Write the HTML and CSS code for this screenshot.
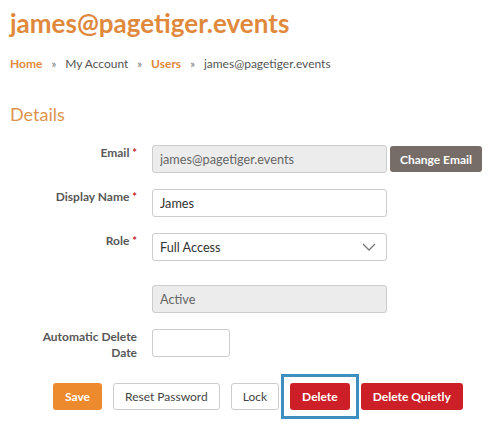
FILE: index.html
```html
<!DOCTYPE html>
<html lang="en">
<head>
    <meta charset="UTF-8">
    <meta name="viewport" content="width=device-width, initial-scale=1.0">
    <title>james@pagetiger.events</title>
    <link rel="stylesheet" href="styles.css">
</head>
<body>
    <div id="page">
        <h1 id="page-title">james@pagetiger.events</h1>
        <div id="breadcrumb">
            <a href="#">Home</a>
            <span class="sep">&raquo;</span>
            <span>My Account</span>
            <span class="sep">&raquo;</span>
            <a href="#">Users</a>
            <span class="sep">&raquo;</span>
            <span>james@pagetiger.events</span>
        </div>

        <h2 id="section-title">Details</h2>

        <div id="user-form">
            <div class="form-row">
                <label class="form-label">Email <span class="req">*</span></label>
                <div class="form-field">
                    <input class="text-input disabled" type="text" value="james@pagetiger.events" disabled>
                    <button class="btn btn-grey">Change Email</button>
                </div>
            </div>
            <div class="form-row">
                <label class="form-label">Display Name <span class="req">*</span></label>
                <div class="form-field">
                    <input class="text-input" type="text" value="James">
                </div>
            </div>
            <div class="form-row">
                <label class="form-label">Role <span class="req">*</span></label>
                <div class="form-field">
                    <div class="select-box">
                        <span>Full Access</span>
                        <svg class="chevron" width="14" height="8" viewBox="0 0 14 8"><path d="M1 1 L7 7 L13 1" fill="none" stroke="#777" stroke-width="1.3"/></svg>
                    </div>
                </div>
            </div>
            <div class="form-row row-spaced">
                <label class="form-label"></label>
                <div class="form-field">
                    <input class="text-input disabled" type="text" value="Active" disabled>
                </div>
            </div>
            <div class="form-row">
                <label class="form-label">Automatic Delete Date</label>
                <div class="form-field">
                    <input class="text-input date-input" type="text" value="">
                </div>
            </div>
        </div>

        <!-- Кнопки действий -->
        <div id="actions">
            <button class="btn btn-orange">Save</button>
            <button class="btn btn-white">Reset Password</button>
            <button class="btn btn-white">Lock</button>
            <span class="highlight-wrap"><button class="btn btn-red">Delete</button></span>
            <button class="btn btn-red">Delete Quietly</button>
        </div>
    </div>
</body>
</html>
```

FILE: styles.css
```css
* {
    margin: 0;
    padding: 0;
    box-sizing: border-box;
}

body {
    font-family: Lato, "Open Sans", Arial, sans-serif;
    background: white;
    color: #444;
}

#page {
    padding: 7px 10px 30px 10px;
}

#page-title {
    font-size: 26px;
    font-weight: bold;
    color: #e0893c;
    line-height: 32px;
}

#breadcrumb {
    margin-top: 17px;
    font-size: 12px;
    color: #555;
    display: flex;
    gap: 8px;
    align-items: center;
}

#breadcrumb a {
    color: #e0893c;
    font-weight: bold;
    text-decoration: none;
}

#breadcrumb .sep {
    color: #777;
    font-size: 11px;
    padding: 0 1px;
}

#section-title {
    margin-top: 32px;
    font-size: 18px;
    font-weight: normal;
    color: #dc9550;
    line-height: 22px;
}

#user-form {
    margin-top: 20px;
    margin-left: 20px;
    display: flex;
    flex-direction: column;
    gap: 16px;
}

.form-row {
    display: grid;
    grid-template-columns: 107px 1fr;
    column-gap: 15px;
    align-items: start;
}

.row-spaced {
    margin-top: 8px;
}

.form-label {
    text-align: right;
    font-size: 12px;
    font-weight: bold;
    color: #585858;
    padding-top: 0;
    line-height: 16px;
}

.req {
    color: #c0262c;
    font-size: 11px;
    vertical-align: top;
}

.form-field {
    display: flex;
    gap: 3px;
    align-items: center;
}

.text-input {
    width: 235px;
    height: 28px;
    border: 1px solid #ccc;
    border-radius: 3px;
    padding: 0 7px;
    font-family: inherit;
    font-size: 12.7px;
    color: #333;
    background: white;
}

.text-input.disabled {
    background: #ececec;
    color: #666;
}

.date-input {
    width: 78px;
}

.select-box {
    width: 235px;
    height: 28px;
    border: 1px solid #ccc;
    border-radius: 3px;
    padding: 0 10px 0 7px;
    font-size: 12.7px;
    color: #333;
    display: flex;
    justify-content: space-between;
    align-items: center;
}

.btn {
    height: 27px;
    border-radius: 3px;
    font-family: inherit;
    font-size: 12px;
    padding: 0 11px;
    border: 1px solid transparent;
    white-space: nowrap;
    cursor: pointer;
}

.btn-grey {
    background: #766d69;
    color: white;
    font-weight: bold;
    height: 26px;
    padding: 0 9px;
}

.btn-orange {
    background: #ee8a2e;
    color: white;
    font-weight: bold;
}

.btn-white {
    background: white;
    color: #444;
    border-color: #ccc;
}

.btn-red {
    background: #cc1f27;
    color: white;
    font-weight: bold;
}

#actions {
    margin-top: 22px;
    margin-left: 43px;
    display: flex;
    gap: 11px;
}

/* Синяя рамка вокруг Delete */
.highlight-wrap {
    position: relative;
    display: flex;
}

.highlight-wrap::after {
    content: "";
    position: absolute;
    top: -9px;
    bottom: -9px;
    left: -9px;
    right: -9px;
    border: 3px solid #3d8fc0;
}
```
